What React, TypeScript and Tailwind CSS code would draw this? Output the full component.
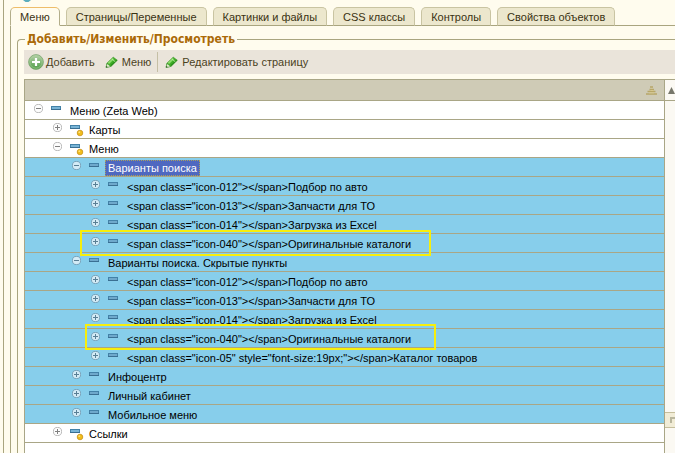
import { useId } from "react";

type Row = {
  depth: number;
  label: string;
  open?: boolean;
  dot?: boolean;
  tinted?: boolean;
  selected?: boolean;
  mark?: "first" | "second";
};

const rows: Row[] = [
  { depth: 0, label: "Меню (Zeta Web)", open: true },
  { depth: 1, label: "Карты", dot: true },
  { depth: 1, label: "Меню", dot: true, open: true },
  { depth: 2, label: "Варианты поиска", open: true, tinted: true, selected: true },
  { depth: 3, label: '<span class="icon-012"></span>Подбор по авто', tinted: true },
  { depth: 3, label: '<span class="icon-013"></span>Запчасти для ТО', tinted: true },
  { depth: 3, label: '<span class="icon-014"></span>Загрузка из Excel', tinted: true },
  { depth: 3, label: '<span class="icon-040"></span>Оригинальные каталоги', tinted: true, mark: "first" },
  { depth: 2, label: "Варианты поиска. Скрытые пункты", open: true, tinted: true },
  { depth: 3, label: '<span class="icon-012"></span>Подбор по авто', tinted: true },
  { depth: 3, label: '<span class="icon-013"></span>Запчасти для ТО', tinted: true },
  { depth: 3, label: '<span class="icon-014"></span>Загрузка из Excel', tinted: true },
  { depth: 3, label: '<span class="icon-040"></span>Оригинальные каталоги', tinted: true, mark: "second" },
  { depth: 3, label: '<span class="icon-05" style="font-size:19px;"></span>Каталог товаров', tinted: true },
  { depth: 2, label: "Инфоцентр", tinted: true },
  { depth: 2, label: "Личный кабинет", tinted: true },
  { depth: 2, label: "Мобильное меню", tinted: true },
  { depth: 1, label: "Ссылки", dot: true },
];

const tabs = ["Меню", "Страницы/Переменные", "Картинки и файлы", "CSS классы", "Контролы", "Свойства объектов"];

const indent = ["pl-[9px]", "pl-[28px]", "pl-[47px]", "pl-[66px]"];

const marks = {
  first: "left-[55px] -top-1 w-[351px]",
  second: "left-[60px] -top-[5px] w-[351px]",
};

function Expander({ open, tinted }: { open?: boolean; tinted?: boolean }) {
  return (
    <svg width="9" height="9" viewBox="0 0 9 9" aria-hidden="true">
      <circle cx="4.5" cy="4.5" r="4.1" fill={tinted ? "#d3ebf6" : "#fdfdfd"} stroke={tinted ? "#7097ad" : "#a8a8a8"} strokeWidth="0.8" />
      <path d={open ? "M2 4.5h5" : "M2 4.5h5M4.5 2v5"} stroke={tinted ? "#5a7f95" : "#808080"} strokeWidth="1" />
    </svg>
  );
}

function NodeIcon({ dot, tinted }: { dot?: boolean; tinted?: boolean }) {
  return (
    <svg width="14" height="13" viewBox="0 0 14 13" aria-hidden="true">
      <rect x="0.5" y="1.5" width="9" height="3" fill={tinted ? "#6fa9cc" : "#79b4d6"} stroke="#4382a8" />
      <path d="M0 4.5h10" stroke="#3a6f92" />
      {dot && (
        <>
          <circle cx="10" cy="9" r="2.8" fill="#f0bd1c" stroke="#c48a10" strokeWidth="0.7" />
          <circle cx="9.3" cy="8.2" r="0.9" fill="#fde27a" />
        </>
      )}
    </svg>
  );
}

function Pencil() {
  return (
    <svg width="13" height="13" viewBox="0 0 13 13" aria-hidden="true">
      <path d="M1 11.500L2 7.200 8.200 1.200 12.300 4.300 6 10.400z" fill="#3fae26" stroke="#3c9128" strokeWidth="0.7" strokeLinejoin="round" />
      <path d="M3.400 7.300L8.300 2.700" stroke="#8fdd6f" strokeWidth="1.8" />
      <path d="M5.800 9.600L11.600 4.300" stroke="#1f7f16" strokeWidth="1" />
      <path d="M6.900 3l3.600 3" stroke="#bdeca4" strokeWidth="0.8" />
      <path d="M1.200 11.400L2.100 7.700l3.400 2.700z" fill="#f1f3dc" stroke="#4d8a3c" strokeWidth="0.4" />
      <path d="M1 11.600l.4-1.700 1.300 1.200z" fill="#1c4d12" />
    </svg>
  );
}

function AddIcon() {
  const id = useId();
  return (
    <svg width="16" height="16" viewBox="0 0 16 16" aria-hidden="true">
      <defs>
        <linearGradient id={id} x1="0" y1="0" x2="0" y2="1">
          <stop offset="0" stopColor="#b9d2ac" />
          <stop offset="1" stopColor="#4d9c45" />
        </linearGradient>
      </defs>
      <circle cx="8" cy="8" r="7.4" fill={`url(#${id})`} stroke="#7ba570" strokeWidth="0.8" />
      <circle cx="8" cy="8" r="6.2" fill="none" stroke="#a9d29a" strokeWidth="0.6" />
      <path d="M8 4v8M4 8h8" stroke="#fff" strokeWidth="2.2" />
    </svg>
  );
}

function Grid() {
  return (
    <table className="w-full table-fixed border-separate border-spacing-0">
      <thead>
        <tr>
          <th className="h-[22px] border-y border-[#a9a686] bg-[#cfcbb6] p-0 pr-[6px]">
            <button type="button" aria-label="Сортировка" className="ml-auto block">
              <svg width="13" height="9" viewBox="0 0 13 9" aria-hidden="true">
                <path d="M5 1h3M4.500 3.500h4.500M2.500 5.500h8M1 8h11" stroke="#b8a768" strokeWidth="1.4" />
                <path d="M6 2.500h1M5.500 4.500h3M4 6.800h5" stroke="#d7c88d" strokeWidth="1" />
              </svg>
            </button>
          </th>
        </tr>
      </thead>
      <tbody>
        {rows.map((row, i) => (
          <tr key={i} className={row.tinted ? "bg-[#87ceeb]" : "bg-white"}>
            <td className="h-[19px] border-b border-[#a9a686] p-0">
              <div className={`relative flex h-[18px] items-start ${indent[row.depth]}`}>
                <button type="button" aria-expanded={!!row.open} aria-label={row.label} className="mt-[3px] block">
                  <Expander open={row.open} tinted={row.tinted} />
                </button>
                <span className="ml-2 mt-1">
                  <NodeIcon dot={row.dot} tinted={row.tinted} />
                </span>
                <span
                  className={`ml-[2px] mt-[2px] whitespace-pre px-[3px] leading-4 ${
                    row.selected ? "bg-[#4f68c0] text-white outline-1 outline-dotted -outline-offset-1 outline-[#a9a15c]" : "text-black"
                  }`}
                >
                  {row.label}
                </span>
                {row.mark && <span className={`absolute z-10 h-[26px] border-2 border-[#f7ee0c] ${marks[row.mark]}`} />}
              </div>
            </td>
          </tr>
        ))}
      </tbody>
    </table>
  );
}

export default function App() {
  return (
    <div className="flex h-screen flex-col overflow-hidden bg-[#fffcee] pl-[3px] font-['Liberation_Sans',sans-serif] text-[11px]">
      <div className="flex min-h-0 flex-1 flex-col border-l border-[#a9a57f] pl-[6px]">
        <div className="flex h-[7px] shrink-0 items-start pl-3">
          <svg width="10" height="2" viewBox="0 0 10 2" aria-hidden="true">
            <path d="M1 0h8L6.500 2h-3z" fill="#5badbd" />
          </svg>
        </div>
        <div role="tablist" className="z-10 flex shrink-0 gap-[6px]">
          {tabs.map((tab, i) => (
            <button
              key={tab}
              type="button"
              role="tab"
              aria-selected={i === 0}
              className={`h-[19px] whitespace-nowrap rounded-t-[5px] border px-[9px] leading-4 text-[#3a3212] ${
                i === 0
                  ? "border-[#b3ae8a] border-t-[#eebd6a] border-b-[#fffcee] bg-[#fffcee]"
                  : "border-[#c9c4a2] border-b-[#a9a57f] bg-[#ece7cd]"
              }`}
            >
              {tab}
            </button>
          ))}
        </div>
        <div className="-mt-px flex min-h-0 flex-1 flex-col border-l border-t border-[#a9a57f] pl-[6px] pt-[5px]">
          <fieldset className="flex min-h-0 min-w-0 flex-1 flex-col rounded-tl border-l border-t border-[#a9a57f] pl-[6px]">
            <legend className="ml-px px-[2px] font-['DejaVu_Sans_Condensed','DejaVu_Sans',sans-serif] text-[12px] font-bold leading-4 text-[#ab6a08]">
              Добавить/Изменить/Просмотреть
            </legend>
            <div className="mt-[3px] flex h-6 shrink-0 items-center bg-[#eae4da] pl-1 text-[#4b421d]">
              <button type="button" className="flex items-center gap-[2px]">
                <AddIcon />
                Добавить
              </button>
              <button type="button" className="ml-[10px] flex items-center gap-1">
                <Pencil />
                Меню
              </button>
              <span className="ml-[6px] h-5 w-px bg-[#c5bfa5]" />
              <button type="button" className="ml-[7px] flex items-center gap-1">
                <Pencil />
                Редактировать страницу
              </button>
            </div>
            <div className="mt-[5px] flex min-h-0 flex-1 overflow-hidden">
              <div className="min-w-0 flex-1 border-x border-[#a9a686] bg-white">
                <Grid />
              </div>
              <div className="flex w-[10px] shrink-0 flex-col bg-[#fbf9f3]">
                <button type="button" aria-label="Вверх" className="flex h-[22px] shrink-0 items-center justify-end border-y border-[#a9a686]">
                  <svg width="7" height="7" viewBox="0 0 7 7" aria-hidden="true">
                    <path d="M3.500 0L7 7H0z" fill="#77776b" />
                  </svg>
                </button>
                <div className="flex-1" />
                <button type="button" aria-label="Вниз" className="mb-[25px] flex h-4 shrink-0 items-center justify-end border-y border-[#c5be9c] bg-[#f1ecd6]">
                  <svg width="5" height="6" viewBox="0 0 5 6" aria-hidden="true">
                    <path d="M1 6V1h4" fill="none" stroke="#b9b69d" strokeWidth="2" />
                  </svg>
                </button>
              </div>
            </div>
          </fieldset>
        </div>
      </div>
    </div>
  );
}
